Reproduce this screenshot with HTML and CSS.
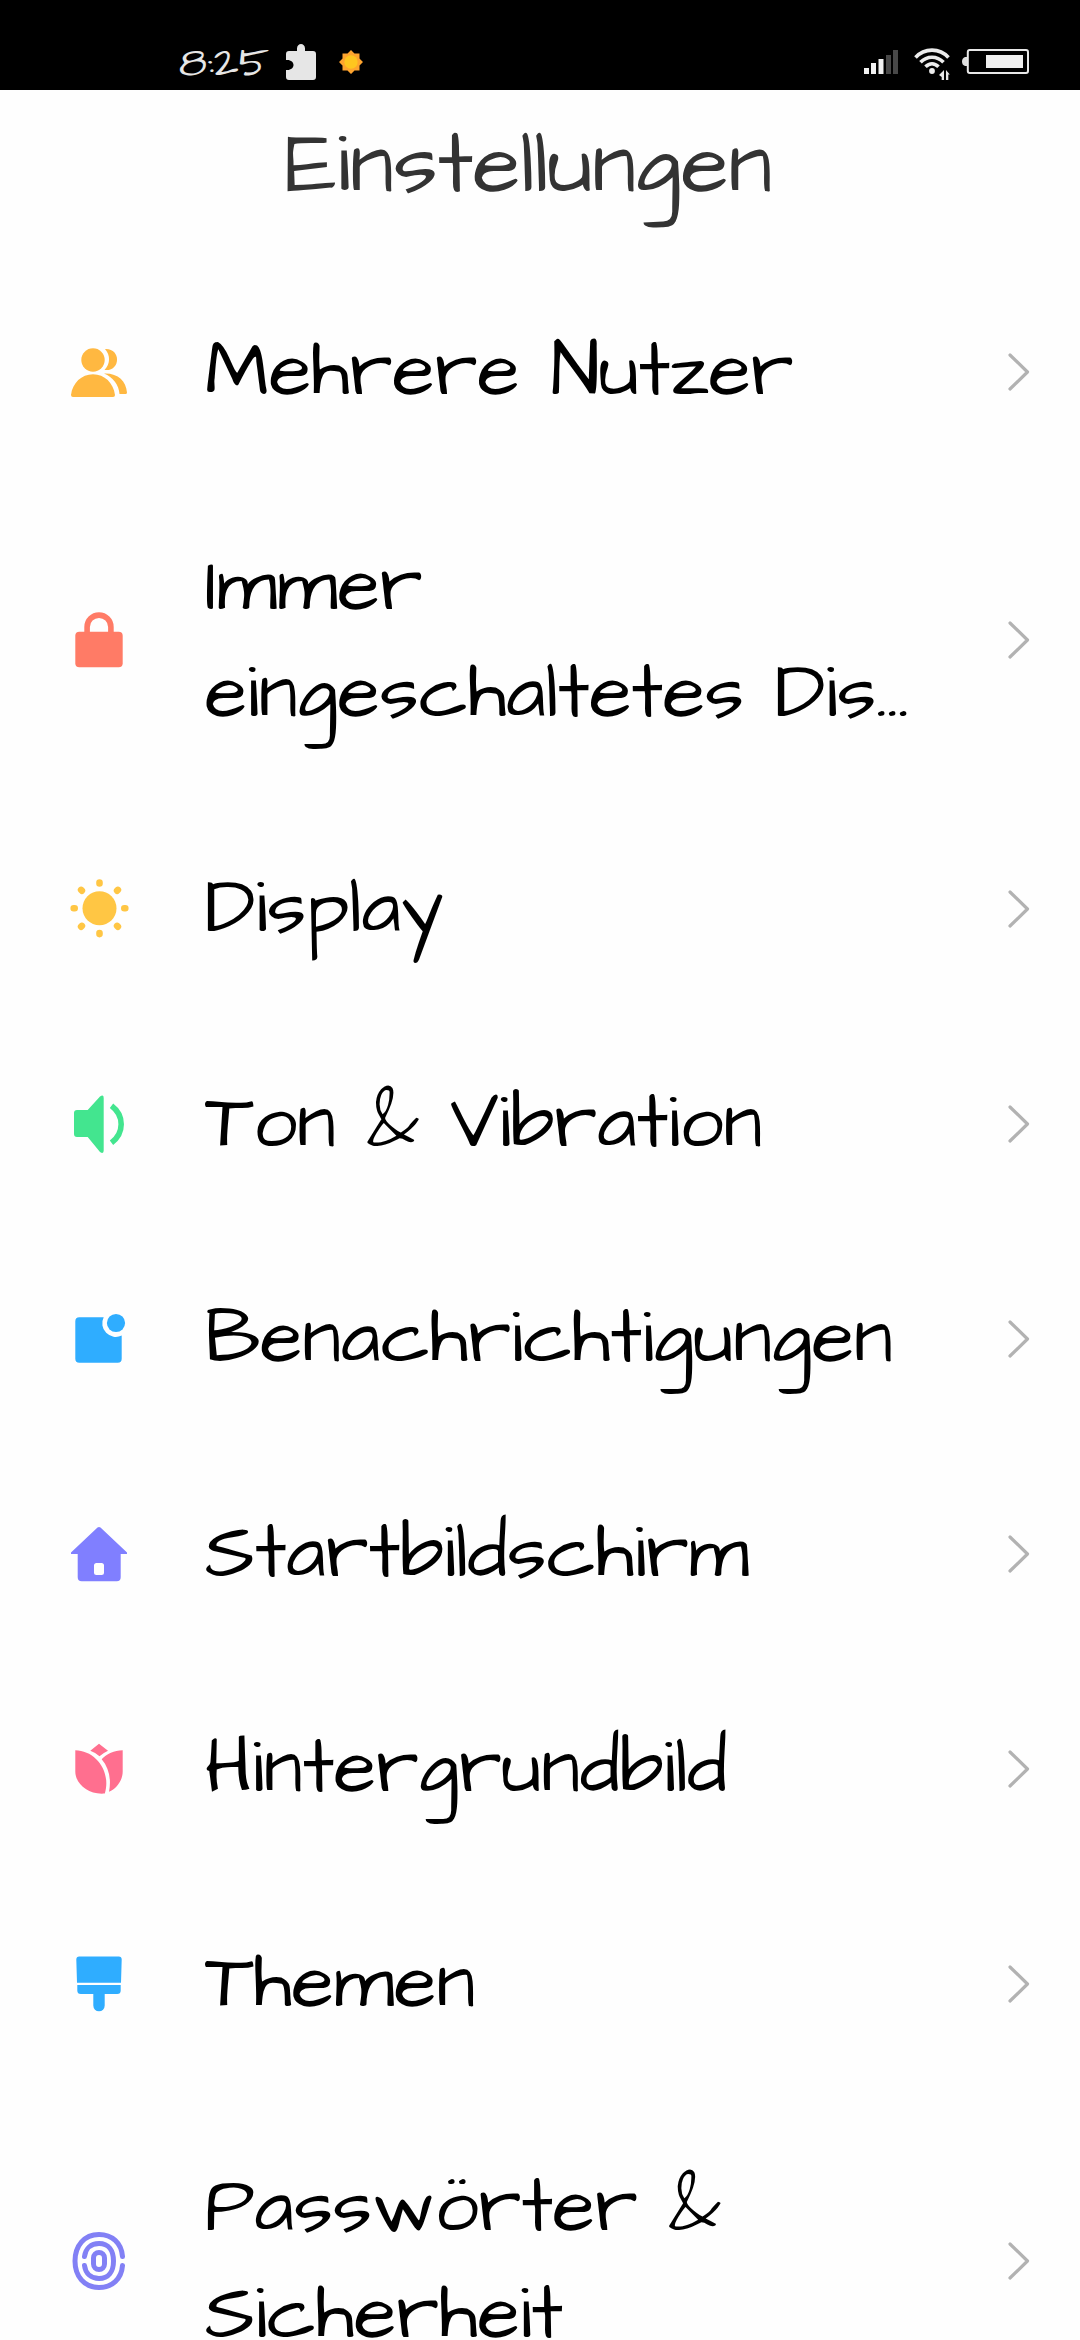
FILE: index.html
```html
<!DOCTYPE html>
<html lang="de">
<head>
<meta charset="utf-8">
<title>Einstellungen</title>
<link rel="stylesheet" href="styles.css">
</head>
<body>
<header class="status">
  <div class="status-left">
    <span class="clock">8:25</span>
    <svg class="puzzle" viewBox="0 0 30 36"><path fill="#e6e6e6" d="M3 7H11V4.500C11 -1.500 19 -1.500 19 4.500V7H27Q30 7 30 10V33Q30 36 27 36H3Q0 36 0 33V26C10 27 10 15 0 16V10Q0 7 3 7Z"/></svg>
    <svg class="weather" viewBox="0 0 24 24"><path fill="#ffa42e" d="M12 0L15.500 3.500H20.500V8.500L24 12L20.500 15.500V20.500H15.500L12 24L8.500 20.500H3.500V15.500L0 12L3.500 8.500V3.500H8.500Z"/><circle cx="12" cy="12" r="6.700" fill="#ffc61f"/></svg>
  </div>
  <div class="status-right">
    <svg class="signal" viewBox="0 0 34 24"><path fill="#f2f2f2" d="M0 18h5v6H0zM7 13h5v11H7zM14.500 9h5v15h-5z"/><path fill="#484848" d="M22 5h5v19h-5zM29 0h5v24h-5z"/></svg>
    <svg class="wifi" viewBox="0 0 36 32"><g fill="none" stroke="#ececec" stroke-width="3.600"><path d="M1.500 9.500C10.500-.3 25.500-.3 34.500 9.500"/><path d="M6.500 14.300C13 7.500 23 7.500 29.500 14.300"/><path d="M11.500 18.800C15.500 14.800 20.500 14.800 24.500 18.800"/></g><circle cx="18" cy="23" r="2.900" fill="#ececec"/><path fill="#e6e6e6" d="M30 22V32H27.700V29L25 27ZM32 32V22L35.800 26.500H34.300V32Z"/></svg>
    <svg class="battery" viewBox="0 0 67 25"><rect x="5.800" y="1" width="60.200" height="23" rx="2" fill="none" stroke="#e8e8e8" stroke-width="2"/><path fill="#e0e0e0" d="M5 8H3Q0 9 0 12.500T3 17H5Z"/><path fill="#efefef" d="M24 6h37v13H24z"/></svg>
  </div>
</header>
<h1 class="title">Einstellungen</h1>
<main class="list">
  <div class="row">
    <svg class="icon" viewBox="0 0 64 64" fill="#ffb841"><circle cx="26" cy="20" r="11.700"/><path d="M4 55C5.500 43 14.500 34.300 26 34.300S46.500 43 48 55Q48 57 46 57H6Q4 57 4 55ZM38 9C54.500 8 54 32 37.500 30C43.500 24 43.500 15 38 9ZM37 33.500C51 33 59 41 60 52.500Q60 54 58.500 54H52.500C52 45 46 37 37 33.500Z"/></svg>
    <div class="label"><span>Mehrere Nutzer</span></div>
    <svg class="chevron" viewBox="0 0 22 38"><path d="M2 2L19.500 19L2 36"/></svg>
  </div>
  <div class="row">
    <svg class="icon" viewBox="0 0 64 64" fill="#ff7b66"><rect x="8.300" y="23.700" width="47.400" height="35.600" rx="4"/><path fill="none" stroke="#ff7b66" stroke-width="5.600" d="M20.100 27V19A11.900 11.900 0 0 1 43.900 19V27"/></svg>
    <div class="label"><span>Immer</span><span>eingeschaltetes Dis…</span></div>
    <svg class="chevron" viewBox="0 0 22 38"><path d="M2 2L19.500 19L2 36"/></svg>
  </div>
  <div class="row">
    <svg class="icon" viewBox="0 0 64 64" fill="#ffc644"><circle cx="32.500" cy="31.300" r="17"/><path fill="none" stroke="#ffc644" stroke-width="6.600" stroke-linecap="round" d="M32.500 5.500v1M32.500 56.100v1M6.700 31.300h1M57.300 31.300h1M14.100 12.900l.8.800M50.100 48.900l.8.800M14.100 49.700l.8-.8M50.100 13.700l.8-.8"/></svg>
    <div class="label"><span>Display</span></div>
    <svg class="chevron" viewBox="0 0 22 38"><path d="M2 2L19.500 19L2 36"/></svg>
  </div>
  <div class="row">
    <svg class="icon" viewBox="0 0 64 64" fill="#43e58f"><path d="M10 18H20.700L33 4.500Q36.700 2 36.700 6V58.500Q36.700 62.500 33 60L20.700 45H10Q7 45 7 42V21Q7 18 10 18Z"/><path fill="none" stroke="#43e58f" stroke-width="5.600" d="M44.500 13.800C57.400 23.500 57.400 41 44.500 50.700"/></svg>
    <div class="label"><span>Ton &amp; Vibration</span></div>
    <svg class="chevron" viewBox="0 0 22 38"><path d="M2 2L19.500 19L2 36"/></svg>
  </div>
  <div class="row">
    <svg class="icon" viewBox="0 0 64 64" fill="#2fadff"><path d="M12.300 10.300H36.700A13.500 13.500 0 0 0 54.700 28.500V51.700Q54.700 55.700 50.700 55.700H12.300Q8.300 55.700 8.300 51.700V14.300Q8.300 10.300 12.300 10.300Z"/><circle cx="49" cy="16" r="9.100"/></svg>
    <div class="label"><span>Benachrichtigungen</span></div>
    <svg class="chevron" viewBox="0 0 22 38"><path d="M2 2L19.500 19L2 36"/></svg>
  </div>
  <div class="row">
    <svg class="icon" viewBox="0 0 64 64" fill="#807fff"><path fill-rule="evenodd" d="M30.500 5.600Q32 4.400 33.500 5.600L60 30.500V32H53.700V55.300Q53.700 59.300 49.700 59.300H14.700Q10.700 59.300 10.700 55.300V32H4V30.500ZM29.500 41Q27 41 27 43.500V50.500Q27 53 29.500 53H34.500Q37 53 37 50.500V43.500Q37 41 34.500 41Z"/></svg>
    <div class="label"><span>Startbildschirm</span></div>
    <svg class="chevron" viewBox="0 0 22 38"><path d="M2 2L19.500 19L2 36"/></svg>
  </div>
  <div class="row">
    <svg class="icon" viewBox="0 0 64 64" fill="#ff6f8f"><path d="M32 6.700L41 13.700Q36 16 32.500 19.300Q28.500 15.500 23.300 13.700ZM8.300 13.300C28 13.500 44.500 34 37.800 56.500C21 58 8.300 46.500 8.300 34.500ZM55.700 13.300V34.500C55.700 43 50 51.500 42 54.700C44.500 42 42 31 34.700 22.300C40 16.500 47 13.600 55.700 13.300Z"/></svg>
    <div class="label"><span>Hintergrundbild</span></div>
    <svg class="chevron" viewBox="0 0 22 38"><path d="M2 2L19.500 19L2 36"/></svg>
  </div>
  <div class="row">
    <svg class="icon" viewBox="0 0 64 64" fill="#2fadff"><path d="M12.300 4.500H51.700Q54.700 4.500 54.700 7.500L54 30.700H10L9.300 7.500Q9.300 4.500 12.300 4.500ZM10.300 33H53.700V38.500Q53.700 42 50.200 42H37.700V53.600A5.700 5.700 0 0 1 26.300 53.600V42H13.800Q10.300 42 10.300 38.500Z"/></svg>
    <div class="label"><span>Themen</span></div>
    <svg class="chevron" viewBox="0 0 22 38"><path d="M2 2L19.500 19L2 36"/></svg>
  </div>
  <div class="row last">
    <svg class="icon" viewBox="0 0 64 64" fill="none" stroke="#8280f5" stroke-width="5" stroke-linecap="round"><path d="M55.500 27.500C54.500 14 45 5.500 32 5.500C17 5.500 8 17 8 32S17 58.500 32 58.500C45 58.500 54.500 50 55.500 36.500"/><path d="M17.500 27.500C18.500 19.500 24 14.500 32 14.500C41.500 14.500 46.500 21.500 46.500 32S41.500 49.500 32 49.500C24 49.500 18.500 44.500 17.500 36.500"/><rect x="26.500" y="23.500" width="11" height="17" rx="5.500"/></svg>
    <div class="label"><span>Passwörter &amp;</span><span>Sicherheit</span></div>
    <svg class="chevron" viewBox="0 0 22 38"><path d="M2 2L19.500 19L2 36"/></svg>
  </div>
</main>
</body>
</html>
```
FILE: styles.css
```css
* { box-sizing: border-box; }
body {
  margin: 0;
  width: 1080px;
  height: 2340px;
  overflow: hidden;
  background: #fefefe;
  color: #000;
  font-family: "Architects Daughter", "DejaVu Sans", sans-serif;
}
svg { display: block; flex: none; }
.status {
  display: flex;
  justify-content: space-between;
  height: 90px;
  padding: 44px 51px 0 179px;
  background: #000;
}
.status-left, .status-right { display: flex; align-items: flex-start; }
.clock {
  width: 107px;
  padding-top: 4px;
  color: #e6e6e6;
  font-size: 43px;
  line-height: 32px;
}
.puzzle { width: 30px; height: 36px; }
.weather { width: 24px; height: 24px; margin: 6px 0 0 23px; }
.signal { width: 34px; height: 24px; margin-top: 6px; }
.wifi { width: 36px; height: 32px; margin: 4px 0 0 16px; }
.battery { width: 67px; height: 25px; margin: 5px 0 0 12px; }
.title {
  margin: 0;
  height: 174px;
  padding: 21px 0 0 285px;
  color: #333;
  font-size: 87.5px;
  font-weight: 400;
  line-height: 110px;
}
.row {
  display: flex;
  align-items: center;
  padding: 54px 50px 54px 67px;
}
.row.last { padding-top: 63px; }
.icon { width: 64px; height: 64px; }
.label {
  flex: 1;
  display: flex;
  flex-direction: column;
  margin-left: 74px;
  font-size: 77.7px;
  line-height: 107px;
  white-space: nowrap;
}
.chevron {
  width: 22px;
  height: 38px;
  fill: none;
  stroke: #b2b2b2;
  stroke-width: 3.2;
  stroke-linecap: round;
  stroke-linejoin: round;
}
```
